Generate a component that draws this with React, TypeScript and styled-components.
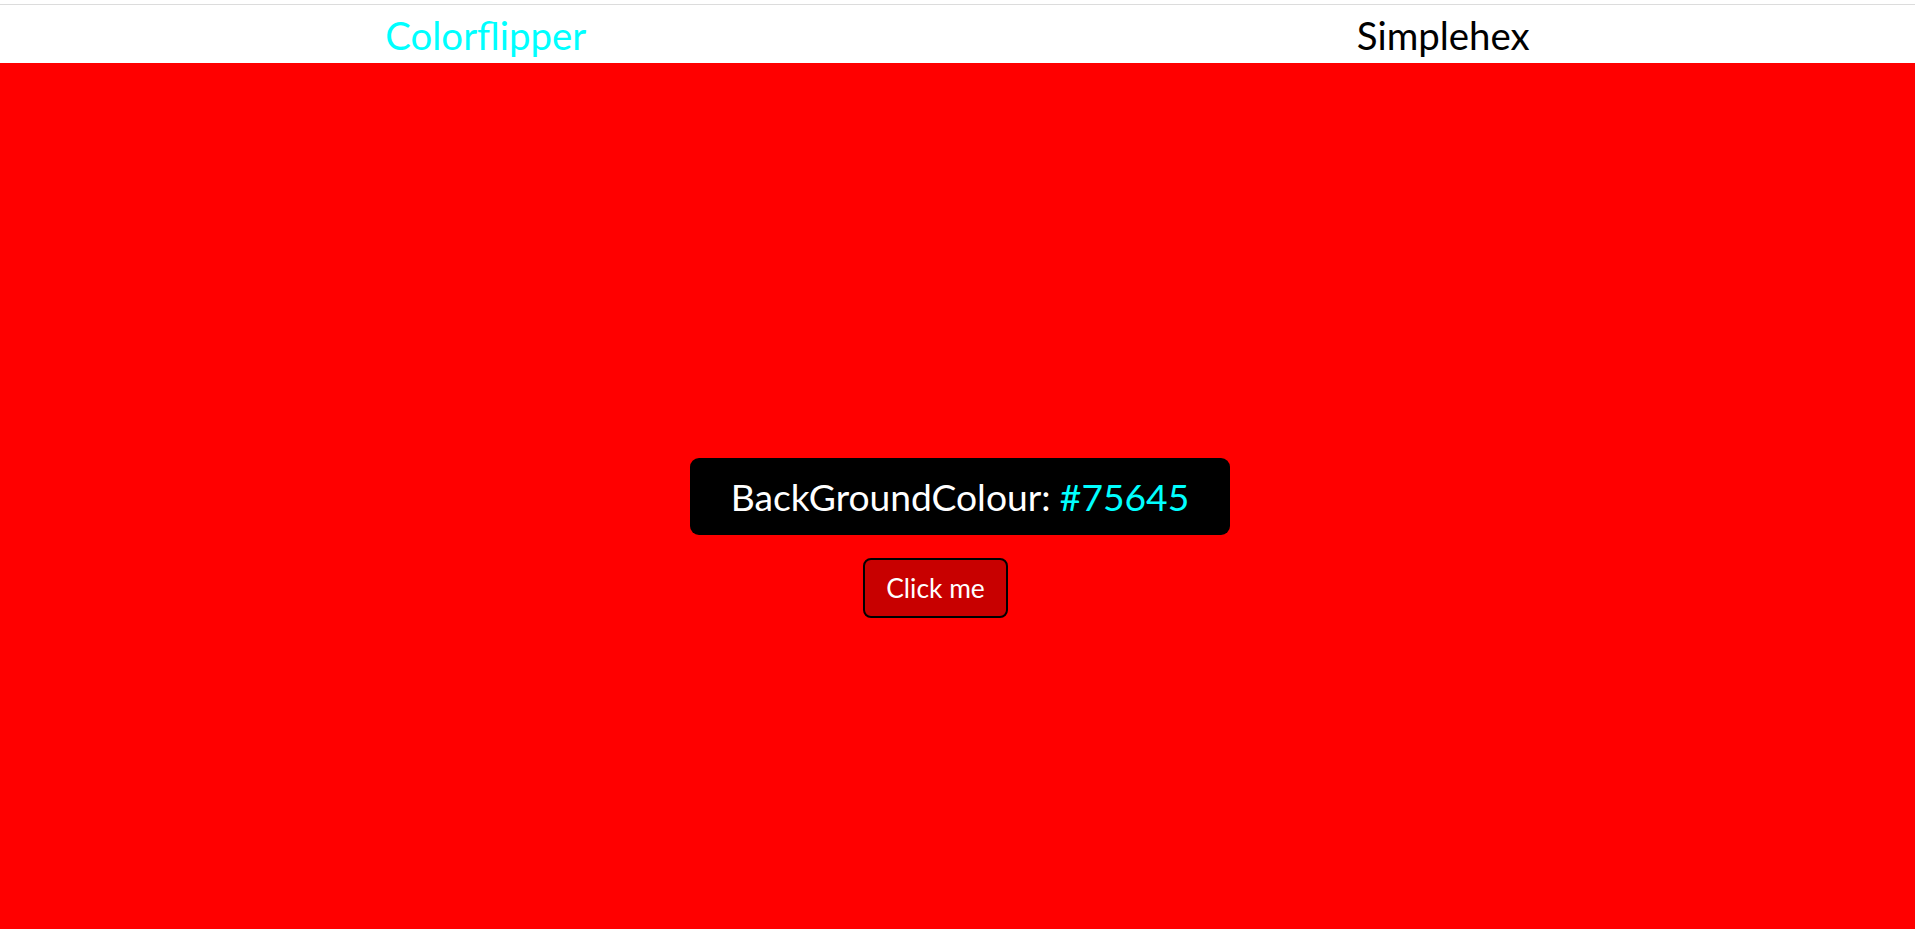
import React from "react";
import styled, { createGlobalStyle } from "styled-components";

const GlobalStyle = createGlobalStyle`
  html, body {
    margin: 0;
    padding: 0;
    height: 100%;
    background: #ffffff;
  }
  body {
    font-family: "Segoe UI", Lato, "Open Sans", sans-serif;
    overflow: hidden;
  }
  #root {
    height: 100%;
  }
`;

const Page = styled.div`
  display: flex;
  flex-direction: column;
  height: 100vh;
  padding-top: 4px;
  box-sizing: border-box;
`;

const NavBar = styled.nav`
  display: flex;
  justify-content: space-around;
  align-items: center;
  height: 58px;
  border-top: 1px solid #dcdcdc;
  background: #ffffff;
`;

const NavLink = styled.a<{ $active?: boolean }>`
  font-size: 38.4px;
  line-height: 1;
  color: ${(p) => (p.$active ? "#00ffff" : "#000000")};
  text-decoration: none;
  padding-top: 2px;
  cursor: pointer;
`;

const Stage = styled.main`
  flex: 1;
  display: flex;
  flex-direction: column;
  align-items: center;
  background: #ff0000;
  padding-top: 395px;
`;

const ColourCard = styled.div`
  display: flex;
  align-items: center;
  justify-content: center;
  height: 77px;
  padding: 0 41px;
  box-sizing: border-box;
  background: #000000;
  border-radius: 9px;
  color: #ffffff;
  font-size: 37.2px;
  margin-left: 5px;
`;

const HexValue = styled.span`
  color: #00ffff;
  margin-left: 0.25em;
`;

const FlipButton = styled.button`
  margin-top: 23px;
  margin-right: 44px;
  height: 60px;
  padding: 0 21px;
  background: #c80000;
  color: #ffffff;
  border: 2px solid #000000;
  border-radius: 8px;
  font-family: inherit;
  font-size: 26.4px;
  cursor: pointer;
`;

export default function App() {
  return (
    <>
      <GlobalStyle />
      <Page>
        <NavBar>
          <NavLink $active>Colorflipper</NavLink>
          <NavLink>Simplehex</NavLink>
        </NavBar>
        <Stage>
          <ColourCard>
            BackGroundColour:<HexValue>#75645</HexValue>
          </ColourCard>
          <FlipButton>Click me</FlipButton>
        </Stage>
      </Page>
    </>
  );
}
